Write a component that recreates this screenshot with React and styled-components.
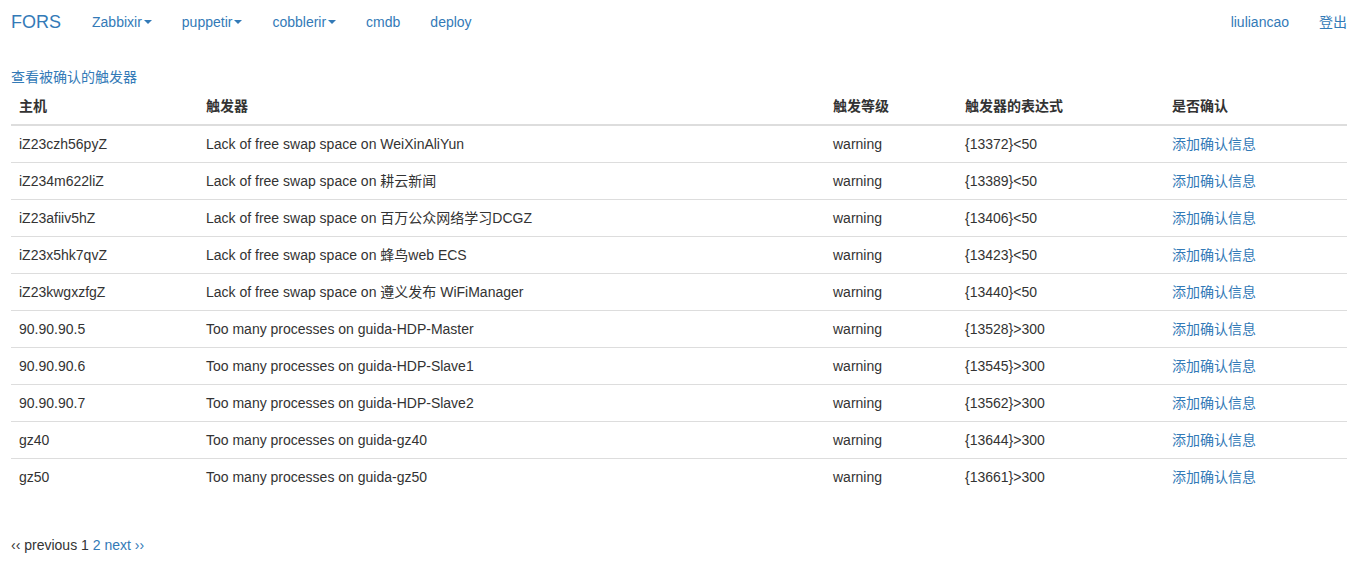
import React from 'react';
import styled, { createGlobalStyle } from 'styled-components';

const GlobalStyle = createGlobalStyle`
  html, body {
    margin: 0;
    padding: 0;
    background: #fff;
  }
  body {
    font-family: "Liberation Sans", Arial, "Noto Sans CJK SC", sans-serif;
    font-size: 14px;
    line-height: 20px;
    color: #333;
  }
`;

const Page = styled.div`
  padding: 0 15px 0 11px;
`;

const Navbar = styled.nav`
  height: 44px;
  display: flex;
  align-items: center;
`;

const Brand = styled.a`
  font-size: 18px;
  color: #337ab7;
  text-decoration: none;
  margin-right: 31px;
`;

const NavList = styled.div`
  display: flex;
  align-items: center;
  gap: 30px;
  margin-left: ${({ $right }) => ($right ? 'auto' : '0')};
`;

const NavLink = styled.a`
  color: #337ab7;
  text-decoration: none;
  display: inline-flex;
  align-items: center;
`;

const Caret = styled.span`
  display: inline-block;
  width: 0;
  height: 0;
  margin-left: 2px;
  border-top: 4px solid #337ab7;
  border-left: 4px solid transparent;
  border-right: 4px solid transparent;
`;

const Main = styled.div`
  padding-top: 23px;
`;

const TopLink = styled.a`
  color: #337ab7;
  text-decoration: none;
  display: block;
`;

const Table = styled.table`
  width: 1336px;
  table-layout: fixed;
  border-collapse: collapse;
  border-spacing: 0;
`;

const Th = styled.th`
  box-sizing: border-box;
  text-align: left;
  font-weight: bold;
  padding: 9px 8px 8px;
  border-bottom: 2px solid #ddd;
  width: ${({ $w }) => $w}px;
`;

const Td = styled.td`
  padding: 8px;
  border-top: ${({ $first }) => ($first ? 'none' : '1px solid #ddd')};
`;

const CellLink = styled.a`
  color: #337ab7;
  text-decoration: none;
`;

const Pager = styled.div`
  margin-top: 40px;
  color: #333;
`;

const PagerLink = styled.a`
  color: #337ab7;
  text-decoration: none;
`;

const columns = [
  { title: '主机', w: 187 },
  { title: '触发器', w: 627 },
  { title: '触发等级', w: 132 },
  { title: '触发器的表达式', w: 207 },
  { title: '是否确认', w: 183 },
];

const rows = [
  ['iZ23czh56pyZ', 'Lack of free swap space on WeiXinAliYun', '{13372}<50'],
  ['iZ234m622liZ', 'Lack of free swap space on 耕云新闻', '{13389}<50'],
  ['iZ23afiiv5hZ', 'Lack of free swap space on 百万公众网络学习DCGZ', '{13406}<50'],
  ['iZ23x5hk7qvZ', 'Lack of free swap space on 蜂鸟web ECS', '{13423}<50'],
  ['iZ23kwgxzfgZ', 'Lack of free swap space on 遵义发布 WiFiManager', '{13440}<50'],
  ['90.90.90.5', 'Too many processes on guida-HDP-Master', '{13528}>300'],
  ['90.90.90.6', 'Too many processes on guida-HDP-Slave1', '{13545}>300'],
  ['90.90.90.7', 'Too many processes on guida-HDP-Slave2', '{13562}>300'],
  ['gz40', 'Too many processes on guida-gz40', '{13644}>300'],
  ['gz50', 'Too many processes on guida-gz50', '{13661}>300'],
];

const App = () => {
  return (
    <Page>
      <GlobalStyle />
      <Navbar>
        <Brand href="#">FORS</Brand>
        <NavList>
          <NavLink href="#">Zabbixir<Caret /></NavLink>
          <NavLink href="#">puppetir<Caret /></NavLink>
          <NavLink href="#">cobblerir<Caret /></NavLink>
          <NavLink href="#">cmdb</NavLink>
          <NavLink href="#">deploy</NavLink>
        </NavList>
        <NavList $right>
          <NavLink href="#">liuliancao</NavLink>
          <NavLink href="#">登出</NavLink>
        </NavList>
      </Navbar>
      <Main>
        <TopLink href="#">查看被确认的触发器</TopLink>
        <Table>
          <thead>
            <tr>
              {columns.map((c) => (
                <Th key={c.title} $w={c.w}>{c.title}</Th>
              ))}
            </tr>
          </thead>
          <tbody>
            {rows.map((r, i) => (
              <tr key={r[0]}>
                <Td $first={i === 0}>{r[0]}</Td>
                <Td $first={i === 0}>{r[1]}</Td>
                <Td $first={i === 0}>warning</Td>
                <Td $first={i === 0}>{r[2]}</Td>
                <Td $first={i === 0}><CellLink href="#">添加确认信息</CellLink></Td>
              </tr>
            ))}
          </tbody>
        </Table>
        <Pager>
          ‹‹ previous 1 <PagerLink href="#">2</PagerLink> <PagerLink href="#">next ››</PagerLink>
        </Pager>
      </Main>
    </Page>
  );
};

export default App;
